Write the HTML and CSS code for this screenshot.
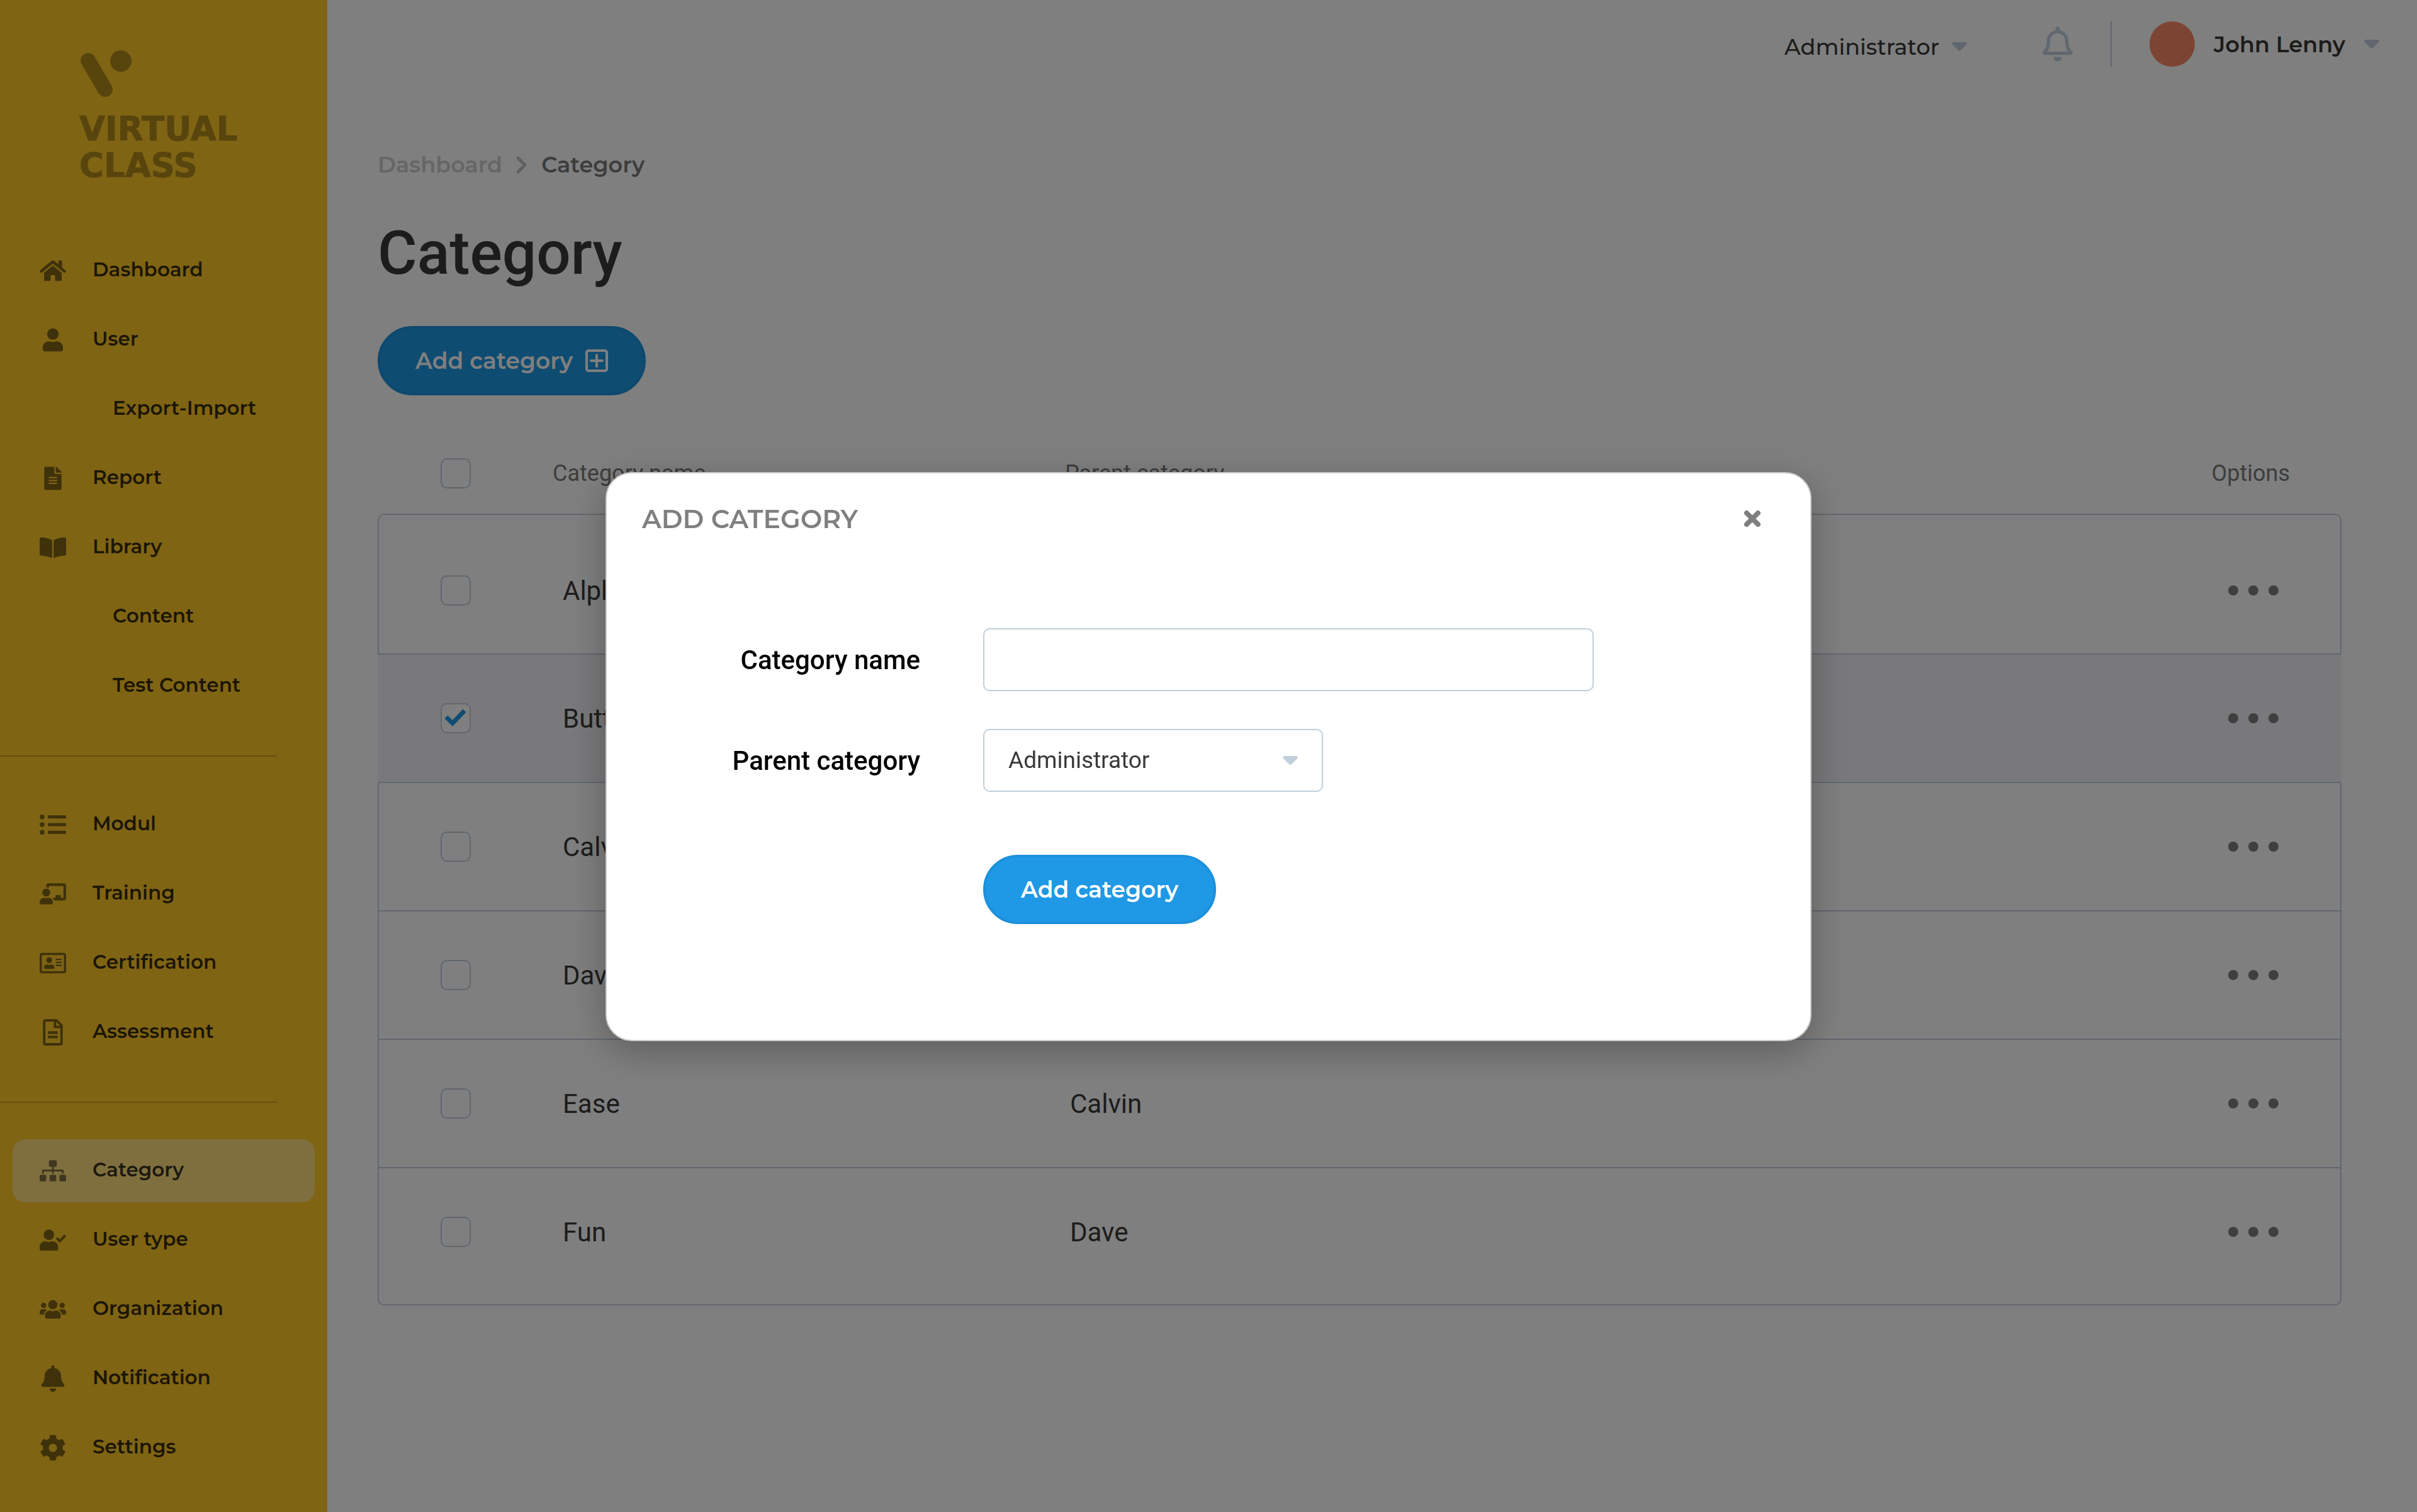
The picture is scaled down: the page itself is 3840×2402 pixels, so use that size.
FILE: index.html
```html
<!DOCTYPE html>
<html lang="en">
<head>
<meta charset="utf-8">
<meta name="viewport" content="width=device-width, initial-scale=1">
<title>Category – Virtual Class</title>
<link rel="stylesheet" href="styles.css">
</head>
<body>
<div class="app">
  <aside class="sidebar">
    <a class="logo" href="#">
      <svg class="logo-mark" viewBox="0 0 82 76" aria-hidden="true"><path d="M12 16 39 62" stroke="currentColor" stroke-width="24" stroke-linecap="round"/><circle cx="64" cy="17" r="17" fill="currentColor"/></svg>
      <span>VIRTUAL</span>
      <span>CLASS</span>
    </a>
    <nav class="nav">
      <a href="#"><svg viewBox="0 0 576 512"><path d="M280.4 148.3 96 300.1V464a16 16 0 0 0 16 16l112-.3a16 16 0 0 0 16-16V368a16 16 0 0 1 16-16h64a16 16 0 0 1 16 16v95.6a16 16 0 0 0 16 16.100l112 .3a16 16 0 0 0 16-16V300L295.700 148.300a12.200 12.200 0 0 0-15.300 0zM571.600 251.500 488 182.600V44a12 12 0 0 0-12-12h-56a12 12 0 0 0-12 12v72.600L318.500 43a48 48 0 0 0-61 0L4.300 251.500a12 12 0 0 0-1.600 16.900l25.500 31a12 12 0 0 0 16.900 1.600l235.200-193.700a12.200 12.200 0 0 1 15.300 0L530.900 301a12 12 0 0 0 16.900-1.600l25.500-31a12 12 0 0 0-1.700-16.900z"/></svg>Dashboard</a>
      <a href="#"><svg viewBox="-70 -36 588 588"><path d="M224 256a128 128 0 1 0 0-256 128 128 0 1 0 0 256zm89.600 32h-16.700c-22.200 10.200-46.900 16-72.900 16s-50.600-5.800-72.900-16h-16.700C60.200 288 0 348.200 0 422.400V464a48 48 0 0 0 48 48h352a48 48 0 0 0 48-48v-41.600c0-74.200-60.200-134.400-134.400-134.400z"/></svg>User</a>
      <a class="sub" href="#">Export-Import</a>
      <a href="#"><svg viewBox="-102 -36 588 588"><path d="M224 136V0H24C10.700 0 0 10.700 0 24v464c0 13.300 10.700 24 24 24h336c13.300 0 24-10.700 24-24V160H248c-13.200 0-24-10.800-24-24zm64 236c0 6.600-5.400 12-12 12H108c-6.600 0-12-5.400-12-12v-8c0-6.600 5.400-12 12-12h168c6.600 0 12 5.400 12 12v8zm0-64c0 6.600-5.400 12-12 12H108c-6.600 0-12-5.400-12-12v-8c0-6.600 5.400-12 12-12h168c6.600 0 12 5.400 12 12v8zm0-72v8c0 6.600-5.400 12-12 12H108c-6.600 0-12-5.400-12-12v-8c0-6.600 5.400-12 12-12h168c6.600 0 12 5.400 12 12zm96-114.100v6.100H256V0h6.100c6.400 0 12.500 2.500 17 7l97.900 98c4.500 4.500 7 10.600 7 16.900z"/></svg>Report</a>
      <a href="#"><svg viewBox="0 0 576 512"><path d="M542.200 32c-54.800 3.100-163.700 14.400-231 55.600-4.600 2.800-7.200 7.900-7.200 13.200v363.900c0 11.600 12.600 18.900 23.300 13.500 69.200-34.800 169.200-44.300 218.700-46.900 16.900-.9 30-14.400 30-30.700V62.800c0-17.700-15.400-31.800-33.800-30.800zM264.700 87.600C197.500 46.400 88.600 35.100 33.800 32 15.400 31 0 45 0 62.800v337.900c0 16.200 13.100 29.800 30 30.700 49.500 2.600 149.600 12.100 218.800 46.900 10.600 5.400 23.200-1.900 23.200-13.400V100.600c0-5.300-2.600-10.200-7.300-13z"/></svg>Library</a>
      <a class="sub" href="#">Content</a>
      <a class="sub" href="#">Test Content</a>
      <hr>
      <a href="#"><svg viewBox="0 0 512 512"><circle cx="48" cy="108" r="46"/><circle cx="48" cy="256" r="46"/><circle cx="48" cy="404" r="46"/><rect x="160" y="76" width="352" height="62" rx="16"/><rect x="160" y="225" width="352" height="62" rx="16"/><rect x="160" y="374" width="352" height="62" rx="16"/></svg>Modul</a>
      <a href="#"><svg viewBox="0 0 640 512"><path d="M208 352c-2.400 0-4.800.3-7.100 1.200C187.900 357.300 174.300 360 160 360s-27.900-2.700-40.900-6.800c-2.300-.8-4.700-1.200-7.100-1.200C49.900 352-.3 402.500 0 464.600.1 490.900 21.700 512 48 512h224c26.300 0 47.900-21.100 48-47.400.3-62.100-49.900-112.600-112-112.600zm-48-32a96 96 0 1 0 0-192 96 96 0 1 0 0 192zM592 0H208c-26.500 0-48 22.300-48 49.600V96c23.400 0 45.100 6.800 64 17.800V64h352v288h-64v-64H384v64h-76.300c19.100 16.600 33.500 38.400 40 64H592c26.500 0 48-22.200 48-49.600V49.600C640 22.300 618.500 0 592 0z"/></svg>Training</a>
      <a href="#"><svg viewBox="0 0 576 512"><path d="M528 32H48C21.500 32 0 53.500 0 80v352c0 26.500 21.500 48 48 48h480c26.500 0 48-21.500 48-48V80c0-26.500-21.500-48-48-48zm0 400H48V80h480v352zM208 256a64 64 0 1 0 0-128 64 64 0 1 0 0 128zm-89.600 128h179.200c12.400 0 22.400-8.600 22.400-19.200v-19.200c0-31.800-30.100-57.600-67.200-57.600-10.800 0-18.700 8-44.800 8-26.900 0-33.400-8-44.800-8-37.100 0-67.200 25.800-67.200 57.600v19.200c0 10.600 10 19.200 22.400 19.200zM360 320h112a8 8 0 0 0 8-8v-16a8 8 0 0 0-8-8H360a8 8 0 0 0-8 8v16a8 8 0 0 0 8 8zm0-64h112a8 8 0 0 0 8-8v-16a8 8 0 0 0-8-8H360a8 8 0 0 0-8 8v16a8 8 0 0 0 8 8zm0-64h112a8 8 0 0 0 8-8v-16a8 8 0 0 0-8-8H360a8 8 0 0 0-8 8v16a8 8 0 0 0 8 8z"/></svg>Certification</a>
      <a href="#"><svg viewBox="0 0 384 512"><path d="M288 248v28a12 12 0 0 1-12 12H108a12 12 0 0 1-12-12v-28a12 12 0 0 1 12-12h168a12 12 0 0 1 12 12zm-12 72H108a12 12 0 0 0-12 12v28a12 12 0 0 0 12 12h168a12 12 0 0 0 12-12v-28a12 12 0 0 0-12-12zM384 131.900V464a48 48 0 0 1-48 48H48a48 48 0 0 1-48-48V48A48 48 0 0 1 48 0h204.100C264.800 0 277 5.100 286 14.100L369.900 98a48 48 0 0 1 14.100 33.900zM256 51.900V128h76.100L256 51.900zM336 464V176H232a24 24 0 0 1-24-24V48H48v416h288z"/></svg>Assessment</a>
      <hr>
      <a class="active" href="#" aria-current="page"><svg viewBox="0 0 640 512"><path d="M128 352H32a32 32 0 0 0-32 32v96a32 32 0 0 0 32 32h96a32 32 0 0 0 32-32v-96a32 32 0 0 0-32-32zm-24-80h192v48h48v-48h192v48h48v-57.600a38.400 38.400 0 0 0-38.400-38.400H344v-64h40a32 32 0 0 0 32-32V32a32 32 0 0 0-32-32H256a32 32 0 0 0-32 32v96a32 32 0 0 0 32 32h40v64H94.400A38.400 38.400 0 0 0 56 262.400V320h48v-48zm264 80h-96a32 32 0 0 0-32 32v96a32 32 0 0 0 32 32h96a32 32 0 0 0 32-32v-96a32 32 0 0 0-32-32zm240 0h-96a32 32 0 0 0-32 32v96a32 32 0 0 0 32 32h96a32 32 0 0 0 32-32v-96a32 32 0 0 0-32-32z"/></svg>Category</a>
      <a href="#"><svg viewBox="0 0 640 512"><path d="M224 256a128 128 0 1 0 0-256 128 128 0 1 0 0 256zm89.600 32h-16.700c-22.200 10.200-46.900 16-72.900 16s-50.600-5.800-72.900-16h-16.700C60.200 288 0 348.200 0 422.400V464a48 48 0 0 0 48 48h352a48 48 0 0 0 48-48v-41.600c0-74.200-60.200-134.400-134.400-134.400zm323-128.400-27.800-28.100c-4.600-4.700-12.100-4.700-16.800-.1L487.200 235.300l-45.500-45.800c-4.600-4.700-12.100-4.700-16.800-.1l-28.100 27.900c-4.700 4.600-4.700 12.100-.1 16.800l81.700 82.300c4.600 4.700 12.100 4.700 16.800.1L636.500 176.400c4.600-4.600 4.700-12.100.1-16.800z"/></svg>User type</a>
      <a href="#"><svg viewBox="0 0 640 512"><path d="M96 224a64 64 0 1 0 0-128 64 64 0 1 0 0 128zm448 0a64 64 0 1 0 0-128 64 64 0 1 0 0 128zm32 32h-64c-17.600 0-33.500 7.100-45.100 18.600 40.300 22.100 68.900 62 75.100 109.400h66a32 32 0 0 0 32-32v-32a64 64 0 0 0-64-64zm-256 0a112 112 0 1 0 0-224 112 112 0 1 0 0 224zm76.800 32h-8.300c-20.800 10-43.900 16-68.500 16s-47.600-6-68.500-16h-8.300C179.600 288 128 339.600 128 403.200V432a48 48 0 0 0 48 48h288a48 48 0 0 0 48-48v-28.800c0-63.600-51.600-115.200-115.200-115.200zm-223.700-13.400C161.500 263.100 145.600 256 128 256H64a64 64 0 0 0-64 64v32a32 32 0 0 0 32 32h65.900c6.300-47.400 34.900-87.300 75.200-109.400z"/></svg>Organization</a>
      <a href="#"><svg viewBox="0 0 448 512"><path d="M224 512a64 64 0 0 0 64-64H160a64 64 0 0 0 64 64zm215.400-149.700c-19.300-20.800-55.500-52-55.500-154.300 0-77.700-54.500-139.900-127.900-155.200V32a32 32 0 1 0-64 0v20.800C118.600 68.100 64.100 130.300 64.100 208c0 102.300-36.200 133.500-55.500 154.300A31.200 31.200 0 0 0 0 384c.1 16.400 13 32 32.100 32h383.800c19.100 0 32-15.600 32.100-32 0-7.600-2.700-15.300-8.600-21.700z"/></svg>Notification</a>
      <a href="#"><svg viewBox="0 0 512 512"><path d="m487.400 315.700-42.600-24.600c4.300-23.200 4.300-47 0-70.200l42.600-24.600c4.900-2.800 7.100-8.600 5.500-14-11.100-35.600-30-67.800-54.700-94.600-3.800-4.100-10-5.100-14.800-2.300L380.800 110c-17.900-15.400-38.500-27.300-60.800-35.100V25.800c0-5.600-3.900-10.500-9.400-11.700-36.700-8.200-74.300-7.800-109.200 0-5.500 1.200-9.400 6.100-9.400 11.700V75c-22.200 7.900-42.800 19.800-60.800 35.100L88.700 85.500c-4.900-2.800-11-1.900-14.800 2.300-24.700 26.700-43.600 58.900-54.700 94.600-1.700 5.400.6 11.200 5.500 14L67.300 221c-4.300 23.200-4.300 47 0 70.200l-42.600 24.600c-4.900 2.800-7.100 8.600-5.500 14 11.100 35.600 30 67.800 54.700 94.600 3.800 4.100 10 5.100 14.800 2.300l42.600-24.600c17.900 15.400 38.500 27.300 60.800 35.100v49.200c0 5.600 3.900 10.500 9.400 11.700 36.700 8.200 74.300 7.800 109.200 0 5.500-1.200 9.400-6.100 9.400-11.700v-49.200c22.200-7.900 42.800-19.800 60.800-35.100l42.600 24.600c4.900 2.800 11 1.900 14.800-2.300 24.700-26.700 43.600-58.900 54.700-94.600 1.500-5.500-.7-11.300-5.600-14.100zM256 336a80 80 0 1 1 0-160 80 80 0 1 1 0 160z"/></svg>Settings</a>
    </nav>
  </aside>

  <div class="page">
    <header class="topbar">
      <label class="role">
        <select aria-label="Role"><option>Administrator</option></select>
        <svg class="caret" viewBox="0 0 24 14" aria-hidden="true"><path d="M2 0h20q3 1 1 4l-9 9q-2 2-4 0L1 4Q-1 1 2 0z"/></svg>
      </label>
      <button class="bell" type="button" aria-label="Notifications">
        <svg viewBox="0 0 448 512"><path d="M439.400 362.300c-19.300-20.800-55.500-52-55.500-154.300 0-77.700-54.500-139.900-127.900-155.200V32a32 32 0 1 0-64 0v20.800C118.600 68.100 64.100 130.300 64.100 208c0 102.300-36.200 133.500-55.500 154.300A31.200 31.200 0 0 0 0 384c.1 16.400 13 32 32.100 32h383.800c19.100 0 32-15.600 32.100-32 0-7.600-2.700-15.300-8.600-21.700zM67.500 368c21.200-28 44.400-74.300 44.500-159.400V208a112 112 0 0 1 224 0v.6c.1 85.100 23.300 131.500 44.500 159.400h-313zM224 512a64 64 0 0 0 64-64H160a64 64 0 0 0 64 64z"/></svg>
      </button>
      <button class="account" type="button">
        <span class="avatar"></span>
        <span>John Lenny</span>
        <svg class="caret" viewBox="0 0 24 14" aria-hidden="true"><path d="M2 0h20q3 1 1 4l-9 9q-2 2-4 0L1 4Q-1 1 2 0z"/></svg>
      </button>
    </header>

    <main class="content">
      <nav class="crumbs" aria-label="Breadcrumb">
        <a href="#">Dashboard</a>
        <svg viewBox="0 0 18 28" aria-hidden="true"><path d="m3 3 11 11L3 25"/></svg>
        <span>Category</span>
      </nav>
      <h1>Category</h1>
      <button class="btn" type="button">Add category
        <svg viewBox="0 0 36 36" aria-hidden="true"><rect x="2" y="2" width="32" height="32" rx="3"/><path d="M18 9v18M9 18h18"/></svg>
      </button>

      <table class="list">
        <thead>
          <tr><th class="pick"><input type="checkbox" aria-label="Select all"></th><th class="name">Category name</th><th class="parent">Parent category</th><th class="options">Options</th></tr>
        </thead>
        <tbody>
          <tr><td class="pick"><input type="checkbox" aria-label="Select Alpha"></td><td>Alpha</td><td></td><td class="options"><button class="more" type="button" aria-label="Options"><i></i><i></i><i></i></button></td></tr>
          <tr class="selected"><td class="pick"><input type="checkbox" aria-label="Select Button" checked></td><td>Button</td><td></td><td class="options"><button class="more" type="button" aria-label="Options"><i></i><i></i><i></i></button></td></tr>
          <tr><td class="pick"><input type="checkbox" aria-label="Select Calvin"></td><td>Calvin</td><td></td><td class="options"><button class="more" type="button" aria-label="Options"><i></i><i></i><i></i></button></td></tr>
          <tr><td class="pick"><input type="checkbox" aria-label="Select Dave"></td><td>Dave</td><td></td><td class="options"><button class="more" type="button" aria-label="Options"><i></i><i></i><i></i></button></td></tr>
          <tr><td class="pick"><input type="checkbox" aria-label="Select Ease"></td><td>Ease</td><td>Calvin</td><td class="options"><button class="more" type="button" aria-label="Options"><i></i><i></i><i></i></button></td></tr>
          <tr><td class="pick"><input type="checkbox" aria-label="Select Fun"></td><td>Fun</td><td>Dave</td><td class="options"><button class="more" type="button" aria-label="Options"><i></i><i></i><i></i></button></td></tr>
        </tbody>
      </table>
    </main>
  </div>
</div>

<div class="overlay">
  <section class="modal" role="dialog" aria-modal="true" aria-labelledby="modal-title">
    <header class="modal-head">
      <h2 id="modal-title">ADD CATEGORY</h2>
      <button class="close" type="button" aria-label="Close"><svg viewBox="0 0 28 28"><path d="m5 5 18 18M23 5 5 23"/></svg></button>
    </header>
    <form class="form">
      <label for="cat-name">Category name</label>
      <input class="field" id="cat-name" type="text">
      <label for="cat-parent">Parent category</label>
      <div class="select">
        <select class="field" id="cat-parent"><option>Administrator</option></select>
        <svg class="caret" viewBox="0 0 24 14" aria-hidden="true"><path d="M2 0h20q3 1 1 4l-9 9q-2 2-4 0L1 4Q-1 1 2 0z"/></svg>
      </div>
      <button class="btn submit" type="button">Add category</button>
    </form>
  </section>
</div>
</body>
</html>
```
FILE: styles.css
```css
:root {
  --yellow: #ffc828;
  --blue: #1f98e5;
  --blue-edge: #1c91dc;
  --line: #c2cfdd;
  --ink: #393939;
  --muted: #7b7b7b;
  --ui: Montserrat, Inter, "Open Sans", sans-serif;
  --body: Roboto, "Liberation Sans", sans-serif;
}

* { box-sizing: border-box; }

body {
  margin: 0;
  background: #fff;
  color: var(--ink);
  font-family: var(--body);
  font-size: 42px;
}

a { color: inherit; text-decoration: none; }
svg { display: block; flex: none; }
button { margin: 0; border: 0; padding: 0; background: none; color: inherit; font: inherit; }
select { appearance: none; margin: 0; border: 0; padding: 0; background: none; color: inherit; font: inherit; }

.app { display: flex; min-height: 100vh; }

/* Sidebar */
.sidebar {
  flex: none;
  width: 520px;
  padding: 80px 20px 52px;
  background: var(--yellow);
  font-family: var(--ui);
}
.logo {
  display: flex;
  flex-direction: column;
  height: 300px;
  padding-left: 106px;
  color: #000;
  font: 700 53px/58px "DejaVu Sans", sans-serif;
  -webkit-text-stroke: 1px currentColor;
  opacity: .3;
}
.logo-mark { width: 82px; height: 76px; margin: 0 0 20px 2px; }

.nav { display: flex; flex-direction: column; gap: 10px; }
.nav a {
  display: flex;
  align-items: center;
  gap: 42px;
  height: 100px;
  padding: 0 0 4px 43px;
  border-radius: 20px;
  color: rgba(0, 0, 0, .78);
  font-size: 31px;
  font-weight: 600;
}
.nav .sub { padding-left: 159px; }
.nav .active { background: rgba(255, 255, 255, .4); }
.nav svg { width: 42px; height: 42px; margin-top: 4px; fill: rgba(0, 0, 0, .5); }
.nav hr {
  width: 440px;
  height: 2px;
  margin: 50px 0 48px -20px;
  border: 0;
  background: rgba(0, 0, 0, .2);
}

/* Top bar */
.page { flex: 1; min-width: 0; }
.topbar {
  display: flex;
  justify-content: flex-end;
  align-items: center;
  height: 140px;
  padding-right: 60px;
  font-family: var(--ui);
  font-size: 35px;
  font-weight: 500;
}
.caret { width: 24px; height: 14px; fill: var(--line); }
.role { display: flex; align-items: center; gap: 20px; padding-top: 8px; }
.bell { margin: 0 60px 0 120px; }
.bell svg { width: 48px; height: 56px; fill: var(--line); }
.account {
  display: flex;
  align-items: center;
  gap: 30px;
  height: 72px;
  padding-left: 60px;
  border-left: 2px solid var(--line);
  font-weight: 600;
}
.avatar { width: 72px; height: 72px; border-radius: 50%; background: #f88864; }

/* Content */
.content { padding: 98px 120px 120px 80px; }
.crumbs {
  display: flex;
  align-items: center;
  gap: 22px;
  color: var(--muted);
  font: 600 35px/48px var(--ui);
}
.crumbs a { color: #ccc; }
.crumbs svg { width: 18px; height: 28px; fill: none; stroke: #c0c0c0; stroke-width: 5; stroke-linecap: round; stroke-linejoin: round; }
h1 { margin: 60px 0; font-size: 96px; font-weight: 500; line-height: 112px; }

.btn {
  display: inline-flex;
  align-items: center;
  gap: 20px;
  height: 110px;
  padding: 0 56px;
  border: 4px solid var(--blue-edge);
  border-radius: 55px;
  background: var(--blue);
  color: #fff;
  font: 600 36px/48px var(--ui);
}
.btn svg { width: 36px; height: 36px; fill: none; stroke: #fff; stroke-width: 4; stroke-linecap: round; }

/* Category list */
.list {
  width: 100%;
  margin-top: 60px;
  border-collapse: separate;
  border-spacing: 0;
  table-layout: fixed;
}
th { height: 128px; padding: 0; color: var(--muted); font-size: 36px; font-weight: 400; text-align: left; }
td { height: 204px; padding: 0; border-bottom: 2px solid var(--line); }
td:first-child { border-left: 2px solid var(--line); }
td:last-child { border-right: 2px solid var(--line); }
tbody tr:first-child td { height: 224px; padding-top: 20px; border-top: 2px solid var(--line); }
tbody tr:last-child td { height: 218px; padding-bottom: 14px; }
tbody tr:first-child td:first-child { border-top-left-radius: 10px; }
tbody tr:first-child td:last-child { border-top-right-radius: 10px; }
tbody tr:last-child td:first-child { border-bottom-left-radius: 10px; }
tbody tr:last-child td:last-child { border-bottom-right-radius: 10px; }
.selected td { background: #f3f3f7; }
.selected td:first-child, .selected td:last-child { border-left-color: #f3f3f7; border-right-color: #f3f3f7; }
.pick { width: 278px; padding-left: 100px; }
td.pick { padding-left: 98px; }
.name { width: 814px; }
td:nth-child(2) { padding-left: 16px; }
td:nth-child(3) { padding-left: 8px; }
.options { width: 280px; padding-right: 82px; text-align: right; }
td.options { padding-right: 98px; }

input[type="checkbox"] {
  appearance: none;
  display: block;
  width: 48px;
  height: 48px;
  margin: 0;
  border: 2px solid var(--line);
  border-radius: 10px;
  background: #fff;
}
input[type="checkbox"]:checked {
  background: #fff url("data:image/svg+xml,%3Csvg xmlns='http://www.w3.org/2000/svg' viewBox='0 0 44 44'%3E%3Cpath d='M7 20l10 10 19-20' fill='none' stroke='%231f98e5' stroke-width='7'/%3E%3C/svg%3E") center / 44px 44px no-repeat;
}
.more { display: flex; gap: 16px; margin-left: auto; }
.more i { width: 16px; height: 16px; border-radius: 50%; background: #7f7f7f; }

/* Dialog */
.overlay {
  position: fixed;
  inset: 0;
  display: flex;
  align-items: center;
  justify-content: center;
  padding-top: 2px;
  background: rgba(0, 0, 0, .5);
}
.modal {
  width: 1916px;
  max-width: 96%;
  padding: 46px 78px 184px 56px;
  border: 2px solid #ccc;
  border-radius: 42px;
  background: #fff;
  box-shadow: 0 16px 60px rgba(0, 0, 0, .28);
}
.modal-head { display: flex; align-items: center; justify-content: space-between; }
h2 { margin: 0; color: #7f7f7f; font: 600 41px/52px var(--ui); }
.close svg { width: 28px; height: 28px; fill: none; stroke: #7f7f7f; stroke-width: 8; stroke-linecap: round; }
.form {
  display: grid;
  grid-template-columns: 442px 970px;
  align-items: center;
  gap: 60px 100px;
  margin-top: 148px;
}
.form label { color: #000; font-weight: 500; text-align: right; }
.field {
  width: 100%;
  height: 100px;
  padding: 0 38px;
  border: 2px solid var(--line);
  border-radius: 10px;
  background: #fff;
  color: var(--ink);
  font: 400 37px/48px var(--body);
}
.select { display: grid; align-items: center; width: 540px; }
.select > * { grid-area: 1 / 1; }
.select .caret { justify-self: end; margin-right: 40px; pointer-events: none; }
.submit { grid-column: 2; justify-self: start; margin-top: 40px; }
```
